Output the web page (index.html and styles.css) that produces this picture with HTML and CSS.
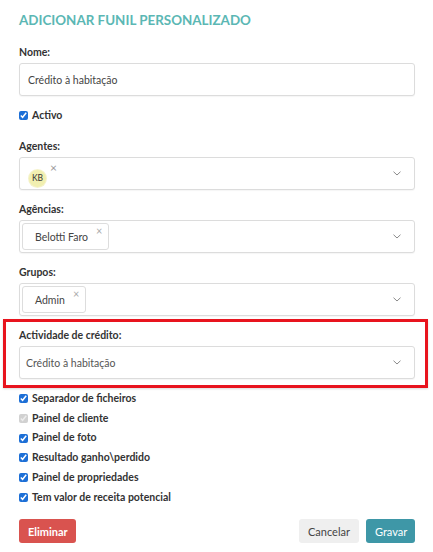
FILE: index.html
```html
<!DOCTYPE html>
<html lang="pt">
<head>
<meta charset="utf-8">
<title>Adicionar funil personalizado</title>
<link rel="stylesheet" href="styles.css">
</head>
<body>
<div class="page">
  <h1 class="title">ADICIONAR FUNIL PERSONALIZADO</h1>

  <div class="field">
    <label class="label">Nome:</label>
    <div class="control input">Crédito à habitação</div>
  </div>

  <div class="check-row activo">
    <input type="checkbox" class="check" checked>
    <span>Activo</span>
  </div>

  <div class="field">
    <label class="label">Agentes:</label>
    <div class="control select">
      <div class="tags">
        <span class="avatar-tag"><span class="avatar">KB</span><span class="x">×</span></span>
      </div>
      <svg class="chev" width="8" height="5" viewBox="0 0 8 5"><path d="M0.5 0.7 L4 4 L7.5 0.7" fill="none" stroke="#8a8a8a" stroke-width="1"/></svg>
    </div>
  </div>

  <div class="field">
    <label class="label">Agências:</label>
    <div class="control select">
      <div class="tags">
        <span class="tag">Belotti Faro<span class="x">×</span></span>
      </div>
      <svg class="chev" width="8" height="5" viewBox="0 0 8 5"><path d="M0.5 0.7 L4 4 L7.5 0.7" fill="none" stroke="#8a8a8a" stroke-width="1"/></svg>
    </div>
  </div>

  <div class="field last">
    <label class="label">Grupos:</label>
    <div class="control select">
      <div class="tags">
        <span class="tag">Admin<span class="x">×</span></span>
      </div>
      <svg class="chev" width="8" height="5" viewBox="0 0 8 5"><path d="M0.5 0.7 L4 4 L7.5 0.7" fill="none" stroke="#8a8a8a" stroke-width="1"/></svg>
    </div>
  </div>

  <div class="highlight">
    <label class="label">Actividade de crédito:</label>
    <div class="control select single">
      <span class="value">Crédito à habitação</span>
      <svg class="chev" width="8" height="5" viewBox="0 0 8 5"><path d="M0.5 0.7 L4 4 L7.5 0.7" fill="none" stroke="#8a8a8a" stroke-width="1"/></svg>
    </div>
  </div>

  <div class="checks">
    <div class="check-row"><input type="checkbox" class="check" checked><span>Separador de ficheiros</span></div>
    <div class="check-row"><input type="checkbox" class="check" checked disabled><span>Painel de cliente</span></div>
    <div class="check-row"><input type="checkbox" class="check" checked><span>Painel de foto</span></div>
    <div class="check-row"><input type="checkbox" class="check" checked><span>Resultado ganho\perdido</span></div>
    <div class="check-row"><input type="checkbox" class="check" checked><span>Painel de propriedades</span></div>
    <div class="check-row"><input type="checkbox" class="check" checked><span>Tem valor de receita potencial</span></div>
  </div>

  <div class="actions">
    <button class="btn btn-danger">Eliminar</button>
    <div class="right">
      <button class="btn btn-default">Cancelar</button>
      <button class="btn btn-primary">Gravar</button>
    </div>
  </div>
</div>
</body>
</html>
```

FILE: styles.css
```css
* { box-sizing: border-box; }
html, body { margin: 0; padding: 0; background: #fff; }
body {
  font-family: Lato, "Open Sans", "Liberation Sans", sans-serif;
  font-size: 10.5px;
  color: #333;
}
.page {
  width: 433px;
  padding: 12px 18px 0 19px;
}
.title {
  margin: 0 0 17px 0;
  font-size: 13.4px;
  line-height: 16px;
  font-weight: 700;
  color: #5bb7b4;
  letter-spacing: 0;
}
.field { margin-bottom: 12px; }
.field.last { margin-bottom: 3px; }
.label {
  display: block;
  font-weight: 700;
  line-height: 15px;
  margin-bottom: 3px;
  color: #333;
}
.control {
  height: 33px;
  border: 1px solid #dcdcdc;
  border-radius: 3px;
  background: #fff;
  box-shadow: 0 1px 1px rgba(0,0,0,0.04);
}
.input {
  display: flex;
  align-items: center;
  padding-left: 8px;
  color: #444;
}
.select {
  display: flex;
  align-items: center;
  justify-content: space-between;
  padding: 2px 13px 2px 2px;
}
.select.single { padding-left: 6px; }
.select .value { color: #555; }
.tags { display: flex; align-items: center; height: 100%; }
.tag {
  display: flex;
  align-items: center;
  height: 27px;
  padding: 0 6px 0 12px;
  border: 1px solid #ddd;
  border-radius: 3px;
  color: #444;
}
.tag .x {
  align-self: flex-start;
  margin-left: 8px;
  margin-top: 1px;
  font-size: 11px;
  line-height: 11px;
  color: #aaa;
}
.avatar-tag {
  display: flex;
  align-items: flex-start;
  padding-left: 7px;
  height: 100%;
  padding-top: 3px;
}
.avatar {
  width: 17px;
  height: 17px;
  margin-top: 7px;
  border-radius: 50%;
  background: #f1efb0;
  box-shadow: 0 0 0 1px #f5f3cc;
  font-size: 8.5px;
  line-height: 17px;
  text-align: center;
  color: #333;
}
.avatar-tag .x {
  margin-left: 4px;
  font-size: 12px;
  line-height: 10px;
  color: #999;
}
.chev { display: block; }

.check-row {
  display: flex;
  align-items: center;
  line-height: 19.7px;
  font-weight: 700;
  color: #333;
}
.check-row.activo {
  line-height: 15px;
  margin-bottom: 16px;
}
.check {
  width: 9px;
  height: 9px;
  margin: 0 4px 0 0;
  accent-color: #1d6fd6;
}
.highlight {
  margin: 0 -13px 0 -16px;
  padding: 6px 10px 6px 13px;
  border: 3px solid #e8141e;
  box-shadow: 0 1px 2px rgba(0,0,0,0.15);
}
.checks { margin-top: 1px; }
.actions {
  display: flex;
  justify-content: space-between;
  margin-top: 12px;
}
.right { display: flex; gap: 7px; }
.btn {
  font-family: inherit;
  font-size: 11px;
  height: 24px;
  padding: 0 9px;
  border: none;
  border-radius: 3px;
  cursor: pointer;
}
.btn-danger { background: #d9534f; color: #fff; font-weight: 700; width: 57px; }
.btn-default { background: #efefef; color: #444; width: 60px; }
.btn-primary { background: #3e97a7; color: #fff; width: 49px; }
```
